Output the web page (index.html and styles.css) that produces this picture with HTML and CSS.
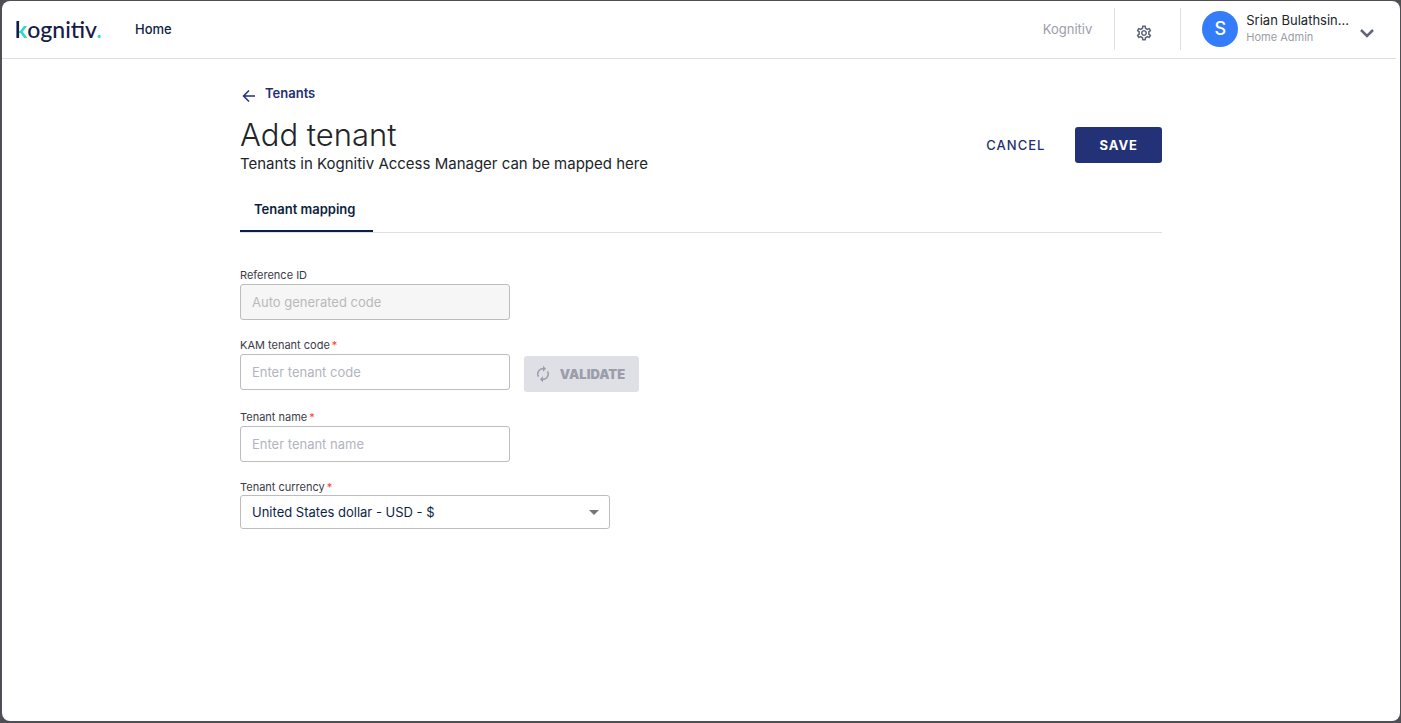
FILE: index.html
```html
<!DOCTYPE html>
<html lang="en">
<head>
<meta charset="utf-8">
<meta name="viewport" content="width=device-width, initial-scale=1">
<title>Add tenant</title>
<link rel="stylesheet" href="styles.css">
</head>
<body>
<div class="window">
  <header class="topbar">
    <a class="logo" href="#"><span class="logo-k">k</span>ognitiv<span class="logo-dot">.</span></a>
    <nav class="nav"><a href="#">Home</a></nav>
    <span class="org">Kognitiv</span>
    <button class="settings" type="button" aria-label="Settings">
      <svg width="18" height="18" viewBox="0 0 24 24" fill="currentColor"><path d="M19.43 12.98c.04-.32.07-.64.07-.98s-.03-.66-.07-.98l2.11-1.65c.19-.15.24-.42.12-.64l-2-3.46c-.09-.16-.26-.25-.44-.25-.06 0-.12.01-.17.03l-2.49 1c-.52-.4-1.08-.73-1.69-.98l-.38-2.65C14.46 2.18 14.25 2 14 2h-4c-.25 0-.46.18-.49.42l-.38 2.65c-.61.25-1.17.59-1.69.98l-2.49-1c-.06-.02-.12-.03-.18-.03-.17 0-.34.09-.43.25l-2 3.46c-.13.22-.07.49.12.64l2.11 1.65c-.04.32-.07.65-.07.98s.03.66.07.98l-2.11 1.65c-.19.15-.24.42-.12.64l2 3.46c.09.16.26.25.44.25.06 0 .12-.01.17-.03l2.49-1c.52.4 1.08.73 1.69.98l.38 2.65c.03.24.24.42.49.42h4c.25 0 .46-.18.49-.42l.38-2.65c.61-.25 1.17-.59 1.69-.98l2.49 1c.06.02.12.03.18.03.17 0 .34-.09.43-.25l2-3.46c.12-.22.07-.49-.12-.64l-2.11-1.65zm-1.98-1.71c.04.31.05.52.05.73 0 .21-.02.43-.05.73l-.14 1.13.89.7 1.08.84-.7 1.21-1.27-.51-1.04-.42-.9.68c-.43.32-.84.56-1.25.73l-1.06.43-.16 1.13-.2 1.35h-1.4l-.19-1.35-.16-1.13-1.06-.43c-.43-.18-.83-.41-1.23-.71l-.91-.7-1.06.43-1.27.51-.7-1.21 1.08-.84.89-.7-.14-1.13c-.03-.31-.05-.54-.05-.74s.02-.43.05-.73l.14-1.13-.89-.7-1.08-.84.7-1.21 1.27.51 1.04.42.9-.68c.43-.32.84-.56 1.25-.73l1.06-.43.16-1.13.2-1.35h1.39l.19 1.35.16 1.13 1.06.43c.43.18.83.41 1.23.71l.91.7 1.06-.43 1.27-.51.7 1.21-1.07.85-.89.7.14 1.13zM12 8c-2.21 0-4 1.79-4 4s1.79 4 4 4 4-1.790 4-4-1.790-4-4-4zm0 6c-1.100 0-2-.9-2-2s.9-2 2-2 2 .9 2 2-.9 2-2 2z"/></svg>
    </button>
    <button class="user" type="button">
      <span class="avatar">S</span>
      <span class="user-text">
        <span class="user-name">Srian Bulathsin...</span>
        <span class="user-role">Home Admin</span>
      </span>
      <svg class="chevron" width="16" height="16" viewBox="0 0 16 16" fill="none" stroke="currentColor" stroke-width="2.500"><path d="M2 4l6 6 6-6"/></svg>
    </button>
  </header>

  <main class="content">
    <a class="back" href="#">
      <svg width="14" height="14" viewBox="0 0 14 14" fill="none" stroke="currentColor" stroke-width="1.5"><path d="M13 7H2M7 1.500L1.500 7 7 12.500"/></svg>
      <span>Tenants</span>
    </a>
    <div class="heading">
      <div>
        <h1>Add tenant</h1>
        <p>Tenants in Kognitiv Access Manager can be mapped here</p>
      </div>
      <div class="actions">
        <button class="btn btn-text" type="button">CANCEL</button>
        <button class="btn btn-primary" type="submit" form="tenant">SAVE</button>
      </div>
    </div>
    <div class="tabs" role="tablist">
      <button class="tab" type="button" role="tab" aria-selected="true">Tenant mapping</button>
    </div>

    <form class="form" id="tenant">
      <div class="field">
        <label for="ref">Reference ID</label>
        <input id="ref" type="text" placeholder="Auto generated code" disabled>
      </div>
      <div class="field-row">
        <div class="field">
          <label for="code">KAM tenant code<span class="req">*</span></label>
          <input id="code" type="text" placeholder="Enter tenant code">
        </div>
        <button class="btn btn-validate" type="button" disabled>
          <svg width="18" height="18" viewBox="0 0 24 24" fill="currentColor"><path d="M12 6v3l4-4-4-4v3c-4.420 0-8 3.580-8 8 0 1.570.46 3.030 1.240 4.260L6.700 14.800c-.45-.83-.7-1.790-.7-2.800 0-3.310 2.690-6 6-6zm6.760 1.740L17.300 9.200c.44.84.7 1.790.7 2.800 0 3.310-2.690 6-6 6v-3l-4 4 4 4v-3c4.420 0 8-3.580 8-8 0-1.570-.46-3.030-1.240-4.260z"/></svg>
          VALIDATE
        </button>
      </div>
      <div class="field">
        <label for="name">Tenant name<span class="req">*</span></label>
        <input id="name" type="text" placeholder="Enter tenant name">
      </div>
      <div class="field field-wide">
        <label for="currency">Tenant currency<span class="req">*</span></label>
        <div class="select">
          <select id="currency"><option>United States dollar - USD - $</option></select>
          <svg width="10" height="5" viewBox="0 0 10 5" fill="currentColor"><path d="M0 0h10L5 5z"/></svg>
        </div>
      </div>
    </form>
  </main>
</div>
</body>
</html>
```

FILE: styles.css
```css
* { box-sizing: border-box; }

body {
  margin: 0;
  min-height: 100vh;
  padding: 1px 1px 2px 2px;
  display: flex;
  background: #504e55;
  color: #212529;
  font-family: Inter, "Liberation Sans", sans-serif;
  font-size: 13px;
}

button, input, select { font: inherit; color: inherit; }
button { border: 0; background: none; padding: 0; }
a { color: inherit; text-decoration: none; }

.window {
  flex: 1;
  border-radius: 8px;
  background: #fff;
}

.topbar {
  display: flex;
  align-items: center;
  height: 58px;
  margin-right: 4px;
  padding: 0 0 2px 13px;
  border-bottom: 1px solid #dedfe4;
}

.logo {
  width: 88px;
  color: #161b47;
  font: 500 23px/30px Lato, sans-serif;
}
.logo-k {
  background: linear-gradient(to right, #161b47 4px, #27d8cc 4px);
  background-clip: text;
  color: transparent;
  font-weight: 700;
}
.logo-dot { color: #27d8cc; }

.nav {
  flex: 1;
  margin-left: 32px;
  color: #0d1f45;
  font-size: 13px;
  font-weight: 500;
}

.org { margin-right: 22px; color: #9c9dab; }

.settings {
  display: grid;
  place-items: center;
  width: 67px;
  height: 42px;
  padding: 8px 8px 0 0;
  border: solid #dedfe4;
  border-width: 0 1px;
  color: #5f667b;
}

.user {
  display: flex;
  align-items: center;
  gap: 8px;
  padding: 0 21px;
  text-align: left;
}
.avatar {
  width: 36px;
  height: 36px;
  border-radius: 50%;
  background: #337dfa;
  color: #fff;
  font-size: 18px;
  font-weight: 500;
  line-height: 36px;
  text-align: center;
}
.user-text { display: grid; }
.user-name { line-height: 18px; }
.user-role { color: #9c9dab; font-size: 11px; line-height: 17px; }
.chevron { margin: 10px 0 0 2px; color: #5f667b; }

.content {
  max-width: 954px;
  margin: 0 auto;
  padding: 25px 16px;
}

.back {
  display: inline-flex;
  gap: 9px;
  margin-left: 2px;
  color: #232f73;
  font-weight: 600;
  line-height: 18px;
}
.back svg { margin-top: 5px; }

.heading {
  display: flex;
  justify-content: space-between;
  align-items: center;
  margin-top: 10px;
}
.heading h1 {
  margin: 0;
  font-size: 31px;
  font-weight: 300;
  line-height: 38px;
}
.heading p {
  margin: 0;
  font-size: 15px;
  font-weight: 400;
  line-height: 20px;
}

.actions { display: flex; gap: 6px; }
.btn {
  display: flex;
  align-items: center;
  justify-content: center;
  height: 36px;
  border-radius: 3px;
  font-weight: 700;
  letter-spacing: 1px;
}
.btn-text { padding: 0 24px; color: #232f73; font-weight: 500; }
.btn-primary { padding: 0 24px; background: #233276; color: #fff; }
.btn-validate {
  gap: 8px;
  width: 115px;
  padding-right: 4px;
  background: #dfe0e6;
  color: #9c9dab;
  font-weight: 900;
  letter-spacing: normal;
}

.tabs { margin-top: 13px; border-bottom: 1px solid #dedfe0; }
.tab {
  height: 45px;
  padding: 0 18px 0 14px;
  border-bottom: 2px solid #0d1f45;
  color: #0d1f3c;
  font-weight: 600;
}

.form {
  display: grid;
  gap: 18px;
  padding-top: 35px;
}
.field { width: 270px; max-width: 100%; }
.field-wide { width: 370px; }
.field-row { display: flex; align-items: flex-end; gap: 14px; }
.field-row .field { margin-bottom: 2px; }
.field label {
  display: block;
  margin-bottom: 1px;
  color: #3a3c48;
  font-size: 11px;
  line-height: 15px;
}
.req { margin-left: 2px; color: #f44336; }

.field input, .field select {
  display: block;
  width: 100%;
  height: 36px;
  padding: 0 11px;
  border: 1px solid #bdbdbd;
  border-radius: 3px;
  background: #fff;
}
.field input::placeholder { color: #b3b4c2; opacity: 1; }
.field input:disabled { background: #f6f6f6; }
.field input:disabled::placeholder { color: #b9b9bb; }

.field-wide label { margin: 0; }
.field .select { position: relative; }
.field select {
  height: 34px;
  appearance: none;
  color: #0d1f45;
}
.select svg {
  position: absolute;
  top: 15px;
  right: 11px;
  color: #757575;
  pointer-events: none;
}
```
